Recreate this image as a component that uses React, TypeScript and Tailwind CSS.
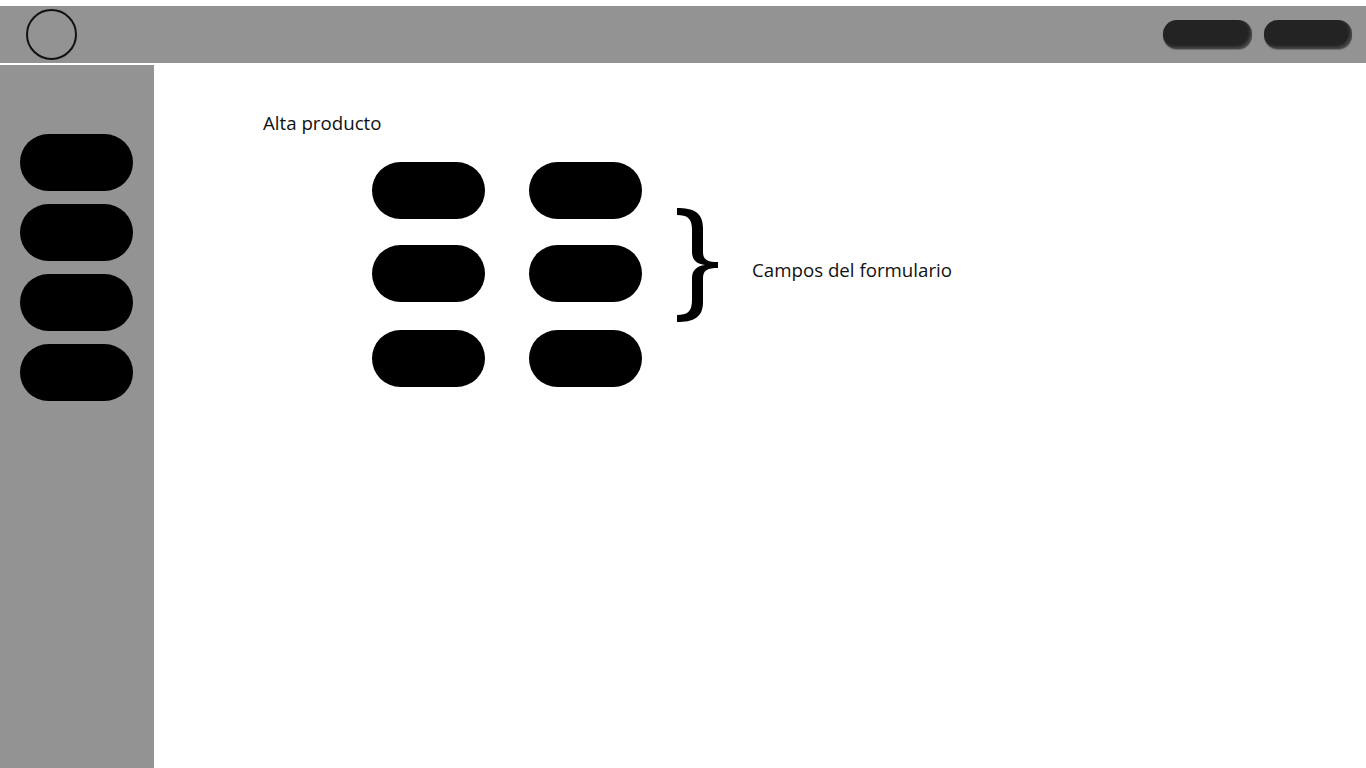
import React from 'react';

const font = { fontFamily: '"Open Sans", "Noto Sans", sans-serif' };

function Brace() {
    return (
        <svg width="41" height="114" viewBox="0 0 41 114" className="block">
            <path
                d="M0 0 C16 0 26 4 26 20 L26 44 C26 52 31 54 41 54 L41 60 C31 60 26 62 26 70 L26 94 C26 110 16 114 0 114 L0 107 C10 107 15 104 15 92 L15 70 C15 62 20 58 28 57 C20 56 15 52 15 44 L15 22 C15 10 10 7 0 7 Z"
                fill="#000"
            />
        </svg>
    );
}

function Pill() {
    return <div className="w-[113px] h-[57px] rounded-full bg-black" />;
}

export default function App() {
    const sideItems = [0, 1, 2, 3];
    const formRows = [0, 1, 2];

    return (
        <div className="h-screen w-full bg-white flex flex-col overflow-hidden" style={font}>
            {/* Top bar */}
            <div className="mt-[6px] h-[57px] shrink-0 bg-[#939393] flex items-center justify-between pl-[26px] pr-[14px]">
                <div className="w-[51px] h-[51px] rounded-full border-2 border-[#111]" />
                <div className="flex gap-3">
                    <button className="w-[89px] h-[29px] rounded-[14px] bg-[#232323] shadow-[inset_-2px_-2px_3px_rgba(255,255,255,0.18),0_1px_1px_rgba(0,0,0,0.25)]" />
                    <button className="w-[88px] h-[29px] rounded-[14px] bg-[#232323] shadow-[inset_-2px_-2px_3px_rgba(255,255,255,0.18),0_1px_1px_rgba(0,0,0,0.25)]" />
                </div>
            </div>

            <div className="flex flex-1 mt-[2px] min-h-0">
                {/* Sidebar */}
                <aside className="w-[154px] shrink-0 bg-[#939393] flex flex-col gap-[13px] pt-[69px] pl-[20px]">
                    {sideItems.map((i) => (
                        <Pill key={i} />
                    ))}
                </aside>

                {/* Main */}
                <main className="flex-1 pl-[109px] pt-[45px] text-[#111]">
                    <h1 className="text-[18.7px] leading-[26px]">Alta producto</h1>

                    <div className="flex items-start mt-[26px] ml-[109px]">
                        <div className="flex flex-col">
                            {formRows.map((r) => (
                                <div key={r} className={`flex gap-[44px] ${r === 1 ? 'mt-[26px]' : r === 2 ? 'mt-[28px]' : ''}`}>
                                    <Pill />
                                    <Pill />
                                </div>
                            ))}
                        </div>
                        <div className="ml-[35px] mt-[46px]">
                            <Brace />
                        </div>
                        <p className="ml-[34px] mt-[95px] text-[18.7px] leading-[26px]">Campos del formulario</p>
                    </div>
                </main>
            </div>
        </div>
    );
}
